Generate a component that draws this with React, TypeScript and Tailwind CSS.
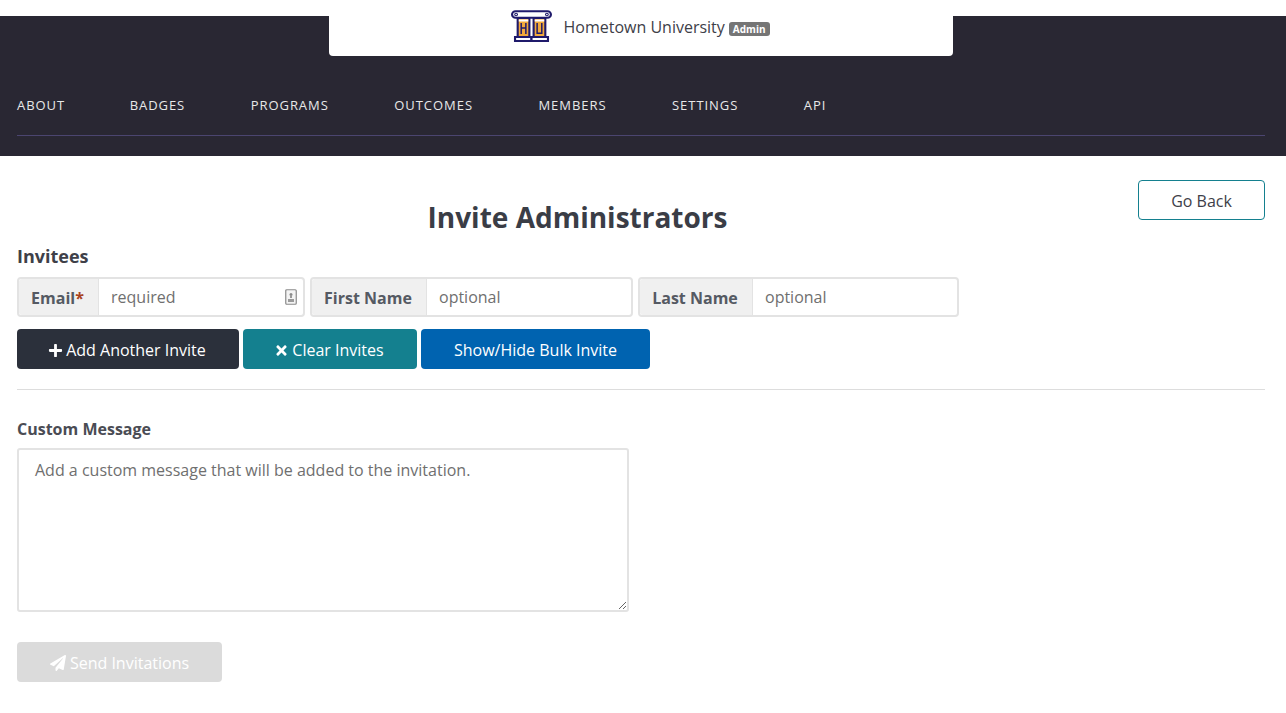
import React from "react";
import { FaPlus, FaTimes, FaPaperPlane } from "react-icons/fa";

function Logo() {
  const navy = "#1f1a6b";
  return (
    <svg width="41" height="32" viewBox="0.7 0 38.6 32" preserveAspectRatio="none" className="shrink-0">
      <path d="M5 1.2h30a3.3 3.3 0 0 1 3.3 3.3 3.3 3.3 0 0 1-3.3 3.3H5A3.3 3.3 0 0 1 1.7 4.5 3.3 3.3 0 0 1 5 1.2z" fill="#fff" stroke={navy} strokeWidth="2" />
      <circle cx="5.5" cy="4.5" r="1.3" fill="none" stroke={navy} strokeWidth="1" />
      <circle cx="34.5" cy="4.5" r="1.3" fill="none" stroke={navy} strokeWidth="1" />
      <rect x="7" y="8" width="11" height="19" fill="#f2a93b" stroke={navy} strokeWidth="2" />
      <rect x="22" y="8" width="11" height="19" fill="#f2a93b" stroke={navy} strokeWidth="2" />
      <path d="M8 10.5h9M23 10.5h9" stroke="#fff" strokeWidth="2" />
      <path d="M10.3 13v11M14.7 13v11M10.3 18h4.4" stroke={navy} strokeWidth="1.4" fill="none" />
      <path d="M25.3 13v10.3h4.4V13" stroke={navy} strokeWidth="1.4" fill="none" />
      <rect x="4.5" y="27" width="15.5" height="4" fill="#fff" stroke={navy} strokeWidth="2" />
      <rect x="20" y="27" width="15.5" height="4" fill="#fff" stroke={navy} strokeWidth="2" />
    </svg>
  );
}

function Field({ label, required, placeholder, labelW, inputW, icon }: { label: string; required?: boolean; placeholder: string; labelW: string; inputW: string; icon?: boolean }) {
  return (
    <div className="relative flex h-10 rounded border-2 border-[#e3e3e3] bg-white">
      <span className={`flex items-center justify-center rounded-l-[3px] border-r border-[#e3e3e3] bg-[#f0f0f0] pr-[2px] pt-[2px] font-bold text-[#555a63] ${labelW}`}>
        {label}
        {required && <span className="text-[#a8431f]">*</span>}
      </span>
      <input placeholder={placeholder} className={`h-full bg-transparent pl-3 text-base text-[#444] outline-none placeholder:text-[#6f6f6f] ${inputW}`} />
      {icon && (
        <svg width="12" height="16" viewBox="0 0 12 16" className="absolute right-[6px] top-[10px]">
          <rect x="0.75" y="0.75" width="10.5" height="14.5" rx="1" fill="#f4f4f4" stroke="#8a8a8a" strokeWidth="1.2" />
          <circle cx="6" cy="5.5" r="1.5" fill="#8a8a8a" />
          <path d="M5 6h2v3H5zM3 10h6v3H3z" fill="#9a9a9a" />
        </svg>
      )}
    </div>
  );
}

export default function App() {
  const nav = ["ABOUT", "BADGES", "PROGRAMS", "OUTCOMES", "MEMBERS", "SETTINGS", "API"];
  return (
    <div className="min-h-[713px] w-full bg-white text-[#3a3d46] font-['Open_Sans',sans-serif]">
      <div className="h-4" />
      <header className="flex h-[140px] flex-col bg-[#292733] pl-[17px] pr-[21px]">
        <div className="relative z-10 mx-auto -mt-4 flex h-14 w-[624px] shrink-0 items-center justify-center rounded-b bg-white pb-[4px] pr-[2px]">
          <Logo />
          <span className="ml-[12px] mt-[2px] text-base text-[#3e4048]">Hometown University</span>
          <span className="ml-[4px] mt-[5px] rounded-[3px] bg-[#757575] px-[4px] py-[1px] text-[10px] font-bold leading-[12px] text-white">Admin</span>
        </div>
        <nav className="flex h-[80px] shrink-0 items-center gap-[65.5px] border-b border-[#4b4570] pt-[20px] text-[13px] tracking-[0.95px] text-[#e8e8e8]">
          {nav.map((n, i) => (
            <span key={n} className={i === 0 ? "mr-[-1px]" : ""}>{n}</span>
          ))}
        </nav>
      </header>
      <main className="pl-[17px] pr-[21px]">
        <div className="flex items-start pt-6">
          <h1 className="flex-1 pt-[19px] text-center text-[28px] font-bold leading-[36px] text-[#3a3d46]">Invite Administrators</h1>
          <button className="h-10 w-[127px] rounded border border-[#14808f] bg-white pt-[2px] text-base text-[#3e4048]">Go Back</button>
        </div>
        <h2 className="mt-[9px] text-lg font-bold leading-[24px] text-[#3e4048]">Invitees</h2>
        <div className="mt-[9px] flex gap-[5px]">
          <Field label="Email" required placeholder="required" labelW="w-[80px]" inputW="w-[204px]" icon />
          <Field label="First Name" placeholder="optional" labelW="w-[115px]" inputW="w-[204px]" />
          <Field label="Last Name" placeholder="optional" labelW="w-[113px]" inputW="w-[204px]" />
        </div>
        <div className="mt-3 flex gap-1 text-base text-white">
          <button className="flex h-10 w-[222px] items-center justify-center gap-[3px] rounded bg-[#2b303b] pr-[2px] pt-[2px]"><FaPlus className="text-[15px]" />Add Another Invite</button>
          <button className="flex h-10 w-[174px] items-center justify-center gap-[3px] rounded bg-[#14808f] pr-[2px] pt-[2px]"><FaTimes className="text-[15px]" />Clear Invites</button>
          <button className="flex h-10 w-[229px] items-center justify-center rounded bg-[#0063b0] pt-[2px]">Show/Hide Bulk Invite</button>
        </div>
        <hr className="mt-5 border-t border-[#dddddd]" />
        <label className="mt-[28px] block text-base font-bold leading-[22px] text-[#4a4c54]">Custom Message</label>
        <textarea placeholder="Add a custom message that will be added to the invitation." className="mt-2 block h-[164px] w-[612px] rounded-[3px] border-2 border-[#e3e3e3] px-4 py-[8px] text-base leading-[24px] outline-none placeholder:text-[#6f6f6f]" />
        <button className="mt-[30px] flex h-10 w-[205px] items-center justify-center gap-1 rounded bg-[#dbdbdb] pt-[2px] text-base text-white"><FaPaperPlane className="text-[16px]" />Send Invitations</button>
      </main>
    </div>
  );
}
